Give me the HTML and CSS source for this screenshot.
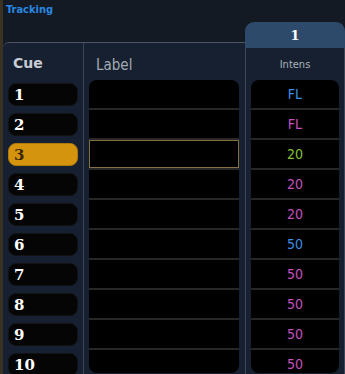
FILE: index.html
```html
<!DOCTYPE html>
<html lang="en">
<head>
    <meta charset="UTF-8">
    <title>Tracking</title>
    <link rel="stylesheet" href="styles.css">
</head>
<body>
    <div class="title">Tracking</div>
    <div class="sheet">
        <div class="main">
            <div class="cues">
                <div class="head">Cue</div>
                <div class="cue-list">
                    <div class="cue">1</div>
                    <div class="cue">2</div>
                    <div class="cue active">3</div>
                    <div class="cue">4</div>
                    <div class="cue">5</div>
                    <div class="cue">6</div>
                    <div class="cue">7</div>
                    <div class="cue">8</div>
                    <div class="cue">9</div>
                    <div class="cue">10</div>
                </div>
            </div>
            <div class="labels">
                <div class="head label-head">Label</div>
                <div class="list">
                    <div class="row"></div>
                    <div class="row"></div>
                    <div class="row selected"></div>
                    <div class="row"></div>
                    <div class="row"></div>
                    <div class="row"></div>
                    <div class="row"></div>
                    <div class="row"></div>
                    <div class="row"></div>
                    <div class="row"></div>
                </div>
            </div>
        </div>
        <div class="chan">
            <div class="chan-num">1</div>
            <div class="chan-body">
                <div class="chan-param">Intens</div>
                <div class="list values">
                    <div class="row blue">FL</div>
                    <div class="row pink">FL</div>
                    <div class="row green">20</div>
                    <div class="row pink">20</div>
                    <div class="row pink">20</div>
                    <div class="row blue">50</div>
                    <div class="row pink">50</div>
                    <div class="row pink">50</div>
                    <div class="row pink">50</div>
                    <div class="row pink">50</div>
                </div>
            </div>
        </div>
    </div>
</body>
</html>
```

FILE: styles.css
```css
body {
    margin: 0;
    height: 374px;
    overflow: hidden;
    background-color: #131a24;
    border-left: 3px solid #3a3223;
    font-family: "DejaVu Sans Condensed", "DejaVu Sans", sans-serif;
}
.title {
    height: 22px;
    padding: 4px 0 0 3px;
    box-sizing: border-box;
    font-size: 11px;
    line-height: 12px;
    font-weight: bold;
    color: #2a87e0;
}
.sheet {
    display: flex;
    align-items: flex-start;
}
.main {
    display: flex;
    width: 242px;
    height: 332px;
    margin-top: 20px;
    border-top: 1px solid #4d5663;
    border-top-left-radius: 6px;
    background-color: #162030;
}
.cues {
    width: 80px;
    border-right: 1px solid #3c4654;
}
.head {
    height: 37px;
    padding: 12px 0 0 10px;
    box-sizing: border-box;
    font-family: "DejaVu Sans", sans-serif;
    font-weight: bold;
    font-size: 14px;
    color: #c9cdd3;
}
.label-head {
    padding: 13px 0 0 12px;
    font-family: "DejaVu Sans Condensed", "DejaVu Sans", sans-serif;
    font-weight: normal;
    font-size: 15px;
    color: #a3aab3;
}
.cue-list {
    padding: 3px 0 0 5px;
}
.cue {
    width: 70px;
    height: 23px;
    margin-bottom: 7px;
    padding-left: 5px;
    box-sizing: border-box;
    background-color: #050505;
    border: 1px solid #121212;
    border-radius: 8px;
    font-family: "DejaVu Serif", serif;
    font-weight: bold;
    font-size: 15px;
    line-height: 22px;
    color: #ffffff;
}
.cue.active {
    background-color: #d5940d;
    border-color: #b07a0a;
    color: #3a2800;
}
.labels {
    width: 160px;
}
.list {
    margin-left: 5px;
    width: 150px;
    height: 293px;
    overflow: hidden;
    border-radius: 8px;
    background-color: #000000;
}
.row {
    height: 28px;
    border-bottom: 2px solid #272727;
}
.row.selected {
    box-shadow: inset 0 0 0 1px #85703f;
}
.chan {
    width: 100px;
}
.chan-num {
    height: 26px;
    background-color: #2e4a6a;
    border-radius: 9px 9px 0 0;
    text-align: center;
    font-family: "DejaVu Serif", serif;
    font-weight: bold;
    font-size: 13px;
    line-height: 27px;
    color: #ffffff;
}
.chan-body {
    height: 326px;
    border-left: 1px solid #3c4654;
    border-right: 1px solid #3c4654;
    background-color: #162030;
}
.chan-param {
    height: 32px;
    text-align: center;
    font-size: 11px;
    line-height: 34px;
    color: #abb1b9;
}
.values {
    width: 88px;
    text-align: center;
    font-size: 14px;
    line-height: 28px;
}
.blue {
    color: #3b8fe3;
}
.pink {
    color: #c451bd;
}
.green {
    color: #7fc232;
}
```
